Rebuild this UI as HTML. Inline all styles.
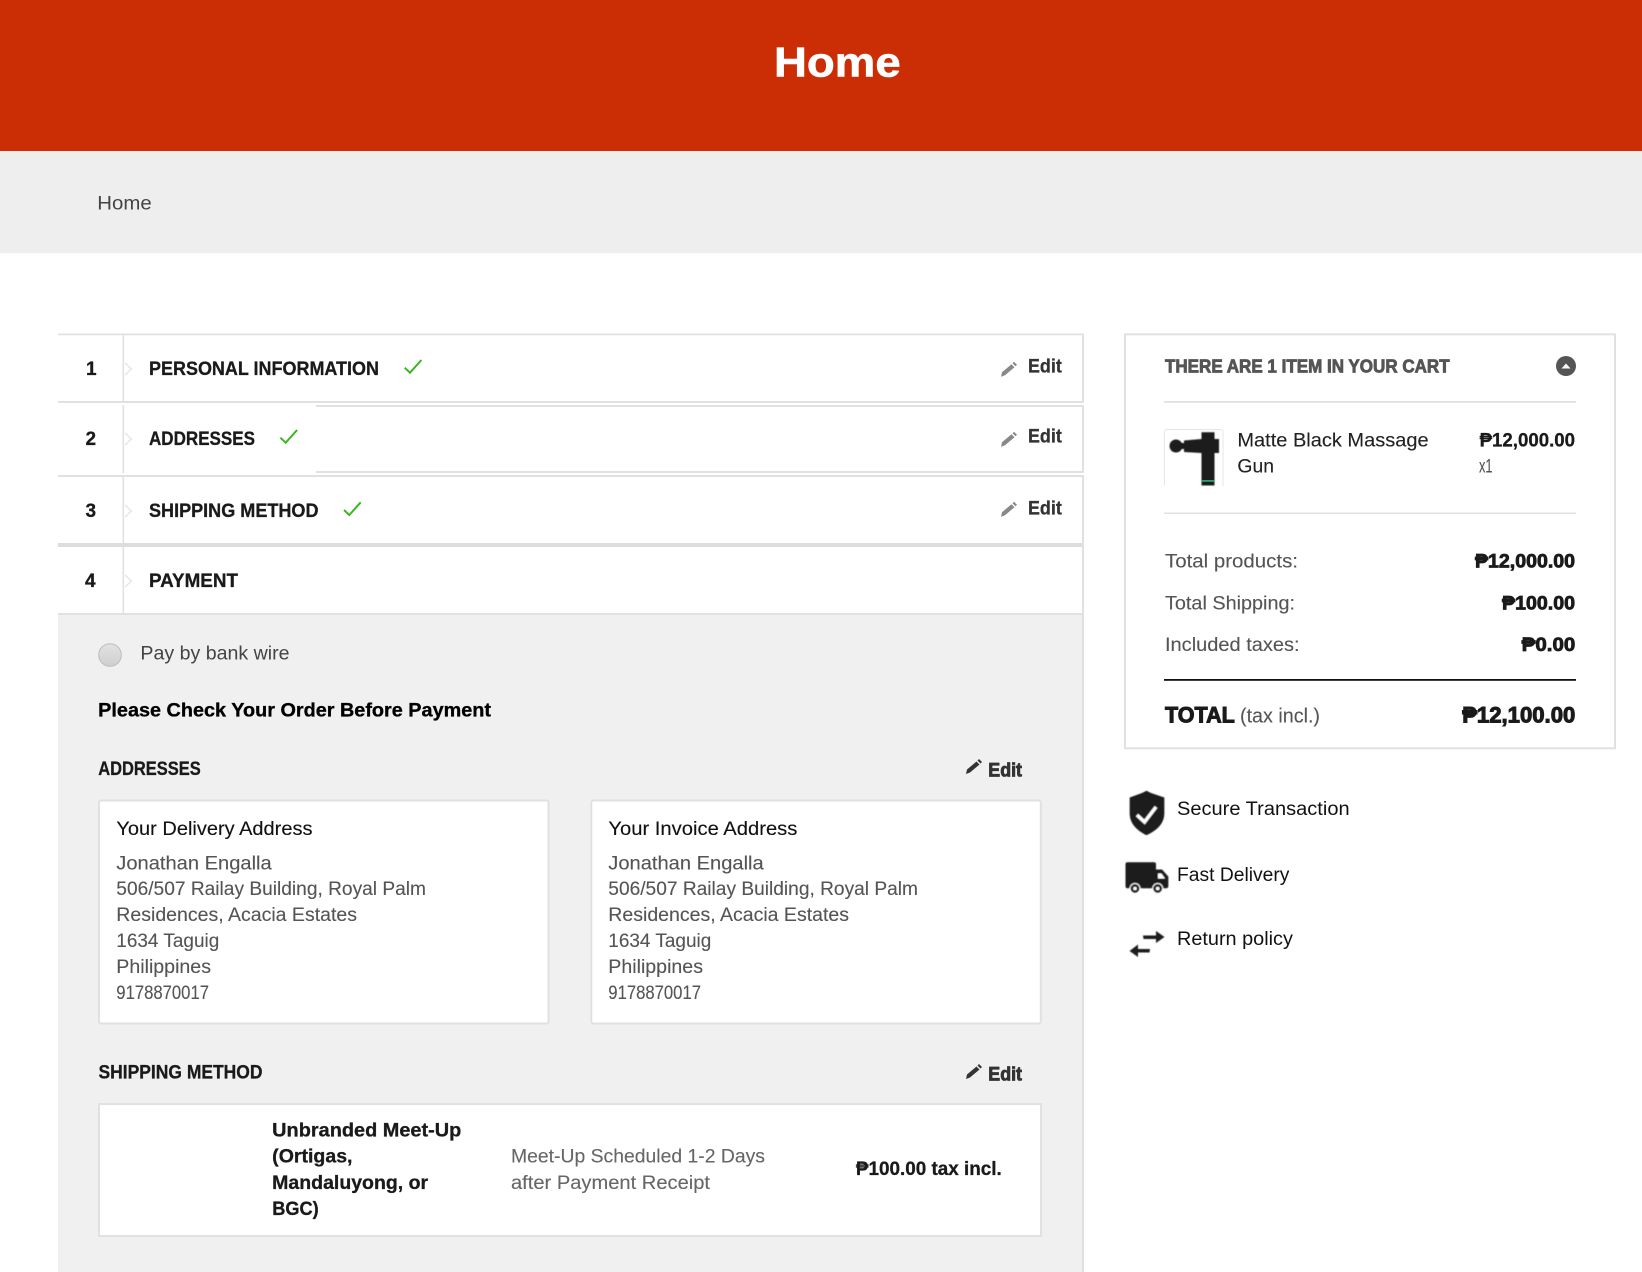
<!DOCTYPE html>
<html lang="en"><head><meta charset="utf-8"><title>Home</title>
<style>
html,body{margin:0;padding:0;background:#fff;width:1642px;height:1272px;overflow:hidden}
svg{display:block;position:absolute;left:0;top:0}
text{font-family:"Liberation Sans",sans-serif;font-size:19px}
.r{fill:#555;stroke:#555;stroke-width:.12px}
.d{fill:#000;stroke:#000;stroke-width:.12px}
.b{font-weight:700;fill:#1a1a1a;stroke:#1a1a1a;stroke-width:.3px}
.k{font-weight:700;fill:#1a1a1a;stroke:#1a1a1a;stroke-width:.8px}
.ln{fill:#e1e1e1}
</style></head><body>
<svg width="1642" height="1272" viewBox="0 0 1642 1272" xmlns="http://www.w3.org/2000/svg">
<defs>
<g id="pen"><path d="M0 15L1 10.5L10.5 2.5L13.5 5.5L4 13.5Z M11.5 1.5L13 0L16 3L14.5 4.5Z"/></g>
<g id="chk"><path d="M.7 7.7L6 12.7L17.4 0" fill="none" stroke="#3cb521" stroke-width="2"/></g>
<g id="chev"><path d="M125 0L131.5 6L125 12" fill="none" stroke="#e4e4e4" stroke-width="1.3"/></g>
<filter id="soft" x="-10%" y="-10%" width="120%" height="120%"><feGaussianBlur stdDeviation=".45"/></filter>
<linearGradient id="rg" x1="0" y1="0" x2="0" y2="1"><stop offset="0" stop-color="#e2e2e2"/><stop offset="1" stop-color="#cfcfcf"/></linearGradient>
</defs>

<rect width="1642" height="151" fill="#cb2e04"/>
<text x="774" y="76.7" style="font-size:42px;fill:#fff;font-weight:700;stroke:#fff;stroke-width:.6px" textLength="126.700" lengthAdjust="spacingAndGlyphs">Home</text>
<rect y="151" width="1642" height="102" fill="#eee"/>
<text x="97.3" y="209.3" style="font-size:19px;fill:#444" textLength="54.400" lengthAdjust="spacingAndGlyphs">Home</text>

<!-- Steps -->
<rect class="ln" x="58" y="333.500" width="1026" height="1.800"/>
<rect class="ln" x="58" y="401" width="1026" height="2"/>
<rect class="ln" x="316" y="405" width="768" height="2"/>
<rect class="ln" x="316" y="471" width="768" height="2"/>
<rect class="ln" x="58" y="475" width="1026" height="2"/>
<rect x="58" y="543" width="1026" height="4" fill="#dddde0"/>
<rect class="ln" x="1082" y="334" width="2" height="69"/>
<rect class="ln" x="1082" y="405" width="2" height="68"/>
<rect class="ln" x="1082" y="475" width="2" height="70"/>
<rect class="ln" x="1082" y="545" width="2" height="727"/>
<rect class="ln" x="122.500" y="335" width="1.600" height="66"/>
<rect class="ln" x="122.500" y="405" width="1.600" height="68"/>
<rect class="ln" x="122.500" y="477" width="1.600" height="66"/>
<rect class="ln" x="122.500" y="547" width="1.600" height="66"/>
<rect x="58" y="615" width="1024" height="657" fill="#f0f0f0"/>
<rect class="ln" x="58" y="613" width="1026" height="2"/>

<use href="#chev" y="363"/><use href="#chev" y="433"/><use href="#chev" y="505"/><use href="#chev" y="575"/>

<text class="b" x="86" y="375">1</text>
<text class="b" x="85.500" y="445">2</text>
<text class="b" x="85.500" y="517">3</text>
<text class="b" x="85" y="587">4</text>

<text class="b" x="149" y="375" textLength="230" lengthAdjust="spacingAndGlyphs">PERSONAL INFORMATION</text>
<text class="b" x="149" y="445" textLength="106" lengthAdjust="spacingAndGlyphs">ADDRESSES</text>
<text class="b" x="149" y="517" textLength="169.500" lengthAdjust="spacingAndGlyphs">SHIPPING METHOD</text>
<text class="b" x="149" y="587" textLength="89" lengthAdjust="spacingAndGlyphs">PAYMENT</text>

<use href="#chk" x="404" y="360"/><use href="#chk" x="279.700" y="430"/><use href="#chk" x="343.300" y="502.300"/>

<g fill="#888"><use href="#pen" x="1001" y="361.700"/><use href="#pen" x="1001" y="431.700"/><use href="#pen" x="1001" y="501.700"/></g>
<text class="b" x="1028" y="372.700" style="fill:#333;stroke:#333" textLength="33.800" lengthAdjust="spacingAndGlyphs">Edit</text>
<text class="b" x="1028" y="442.700" style="fill:#333;stroke:#333" textLength="33.800" lengthAdjust="spacingAndGlyphs">Edit</text>
<text class="b" x="1028" y="514.700" style="fill:#333;stroke:#333" textLength="33.800" lengthAdjust="spacingAndGlyphs">Edit</text>

<!-- Payment panel -->
<circle cx="110" cy="655" r="11.300" fill="url(#rg)" stroke="#bdbdbd" stroke-width="1"/>
<text x="140.400" y="659.300" style="font-size:19px;fill:#444" textLength="149.200" lengthAdjust="spacingAndGlyphs">Pay by bank wire</text>
<text class="b" x="98.200" y="716.700" style="fill:#000;stroke:#000" textLength="392.800" lengthAdjust="spacingAndGlyphs">Please Check Your Order Before Payment</text>
<text class="b" x="98.200" y="775" textLength="102.500" lengthAdjust="spacingAndGlyphs">ADDRESSES</text>
<use href="#pen" x="966" y="759" fill="#333"/>
<text class="k" x="988.300" y="776.700" style="fill:#333;stroke:#333" textLength="33.700" lengthAdjust="spacingAndGlyphs">Edit</text>

<rect x="99" y="800.500" width="449.500" height="223" rx="2" fill="#fff" stroke="#e1e1e1" stroke-width="2"/>
<rect x="591.300" y="800.500" width="449.500" height="223" rx="2" fill="#fff" stroke="#e1e1e1" stroke-width="2"/>

<text class="d" x="116.400" y="835" style="fill:#111;stroke:#111" textLength="196.100" lengthAdjust="spacingAndGlyphs">Your Delivery Address</text>
<text class="r" x="116.300" y="869.300" textLength="155.400" lengthAdjust="spacingAndGlyphs">Jonathan Engalla</text>
<text class="r" x="116.300" y="895" textLength="309.700" lengthAdjust="spacingAndGlyphs">506/507 Railay Building, Royal Palm</text>
<text class="r" x="116.300" y="921" textLength="240.700" lengthAdjust="spacingAndGlyphs">Residences, Acacia Estates</text>
<text class="r" x="116.300" y="947" textLength="103" lengthAdjust="spacingAndGlyphs">1634 Taguig</text>
<text class="r" x="116.300" y="973" textLength="94.700" lengthAdjust="spacingAndGlyphs">Philippines</text>
<text class="r" x="116.300" y="999" style="font-size:19px" textLength="92.700" lengthAdjust="spacingAndGlyphs">9178870017</text>

<text class="d" x="608.400" y="835" style="fill:#111;stroke:#111" textLength="189" lengthAdjust="spacingAndGlyphs">Your Invoice Address</text>
<text class="r" x="608.300" y="869.300" textLength="155.400" lengthAdjust="spacingAndGlyphs">Jonathan Engalla</text>
<text class="r" x="608.300" y="895" textLength="309.700" lengthAdjust="spacingAndGlyphs">506/507 Railay Building, Royal Palm</text>
<text class="r" x="608.300" y="921" textLength="240.700" lengthAdjust="spacingAndGlyphs">Residences, Acacia Estates</text>
<text class="r" x="608.300" y="947" textLength="103" lengthAdjust="spacingAndGlyphs">1634 Taguig</text>
<text class="r" x="608.300" y="973" textLength="94.700" lengthAdjust="spacingAndGlyphs">Philippines</text>
<text class="r" x="608.300" y="999" style="font-size:19px" textLength="92.700" lengthAdjust="spacingAndGlyphs">9178870017</text>

<text class="b" x="98.500" y="1078.300" textLength="164" lengthAdjust="spacingAndGlyphs">SHIPPING METHOD</text>
<use href="#pen" x="966" y="1064" fill="#333"/>
<text class="k" x="988.300" y="1080.700" style="fill:#333;stroke:#333" textLength="33.700" lengthAdjust="spacingAndGlyphs">Edit</text>

<rect x="99" y="1104" width="942" height="132" fill="#fff" stroke="#e1e1e1" stroke-width="2"/>
<text class="b" x="272.200" y="1136.700" textLength="189.100" lengthAdjust="spacingAndGlyphs">Unbranded Meet-Up</text>
<text class="b" x="272.200" y="1162.700" textLength="80.300" lengthAdjust="spacingAndGlyphs">(Ortigas,</text>
<text class="b" x="272.200" y="1189" textLength="155.900" lengthAdjust="spacingAndGlyphs">Mandaluyong, or</text>
<text class="b" x="272.200" y="1215" textLength="46.500" lengthAdjust="spacingAndGlyphs">BGC)</text>
<text class="r" x="511" y="1162.700" style="fill:#666;stroke:#666" textLength="254" lengthAdjust="spacingAndGlyphs">Meet-Up Scheduled 1-2 Days</text>
<text class="r" x="511" y="1189" style="fill:#666;stroke:#666" textLength="199" lengthAdjust="spacingAndGlyphs">after Payment Receipt</text>
<text class="b" x="855.900" y="1175" textLength="145.900" lengthAdjust="spacingAndGlyphs">₱100.00 tax incl.</text>

<!-- Cart -->
<rect x="1125" y="334.300" width="490" height="414" fill="#fff" stroke="#e1e1e1" stroke-width="2"/>
<text class="k" x="1165" y="372.700" style="font-size:18px;fill:#555;stroke:#555" textLength="284.600" lengthAdjust="spacingAndGlyphs">THERE ARE 1 ITEM IN YOUR CART</text>
<circle cx="1566" cy="366" r="10" fill="#555"/>
<path d="M1561.500 368.500L1566 363.500L1570.500 368.500Z" fill="#fff"/>
<rect class="ln" x="1164" y="401" width="412" height="1.800"/>
<path d="M1164.500 486V432Q1164.500 429.500 1167 429.500H1220.500Q1223 429.500 1223 432V486" fill="none" stroke="#e6e6e6"/>
<g fill="#1b1b1b" filter="url(#soft)">
<circle cx="1176" cy="446" r="6.500"/>
<rect x="1180" y="443" width="6" height="6"/>
<path d="M1184 440.500L1201.500 439V432.200H1214.500V439H1219V453H1214.500V485.500H1201.500V453L1184 452Z"/>
</g>
<rect x="1201.500" y="480" width="13" height="1.800" fill="#2f9e6e"/>
<text class="d" x="1237.400" y="446.700" style="fill:#222;stroke:#222" textLength="191.200" lengthAdjust="spacingAndGlyphs">Matte Black Massage</text>
<text class="d" x="1237.400" y="472.700" style="fill:#222;stroke:#222" textLength="36.600" lengthAdjust="spacingAndGlyphs">Gun</text>
<text class="b" x="1479.600" y="446.700" textLength="95.400" lengthAdjust="spacingAndGlyphs">₱12,000.00</text>
<text class="r" x="1479" y="472.700" textLength="13.600" lengthAdjust="spacingAndGlyphs">x1</text>
<rect class="ln" x="1164" y="512.500" width="412" height="1.500"/>

<text class="r" x="1165" y="567.300" textLength="133" lengthAdjust="spacingAndGlyphs">Total products:</text>
<text class="k" x="1475" y="567.300" textLength="100" lengthAdjust="spacingAndGlyphs">₱12,000.00</text>
<text class="r" x="1165" y="609.300" textLength="130" lengthAdjust="spacingAndGlyphs">Total Shipping:</text>
<text class="k" x="1502" y="609.300" textLength="73" lengthAdjust="spacingAndGlyphs">₱100.00</text>
<text class="r" x="1165" y="651" textLength="134.600" lengthAdjust="spacingAndGlyphs">Included taxes:</text>
<text class="k" x="1521.700" y="651" textLength="53.600" lengthAdjust="spacingAndGlyphs">₱0.00</text>
<rect x="1164" y="679" width="412" height="1.800" fill="#111"/>
<text class="k" x="1165" y="722.700" style="font-size:22px;stroke-width:1px" textLength="69.800" lengthAdjust="spacingAndGlyphs">TOTAL</text>
<text class="r" x="1240" y="722.700" style="font-size:20px" textLength="80" lengthAdjust="spacingAndGlyphs">(tax incl.)</text>
<text class="k" x="1462.200" y="722.700" style="font-size:22px;stroke-width:1px" textLength="113.100" lengthAdjust="spacingAndGlyphs">₱12,100.00</text>

<!-- Reassurance -->
<g filter="url(#soft)">
<path d="M1146.500 790.700L1151 793L1164.300 797.500V814Q1164 827 1147 835H1146Q1130 827 1129.700 814V797.500L1142 793Z" fill="#1a1a1a"/>
<path d="M1137 815L1144.500 822L1156 807" fill="none" stroke="#fff" stroke-width="3.400"/>
</g>
<text x="1177" y="815" style="fill:#111" textLength="172.600" lengthAdjust="spacingAndGlyphs">Secure Transaction</text>

<g filter="url(#soft)">
<path d="M1127.500 862.300H1154Q1156 862.300 1156 864.300V869.500H1162L1168.300 876.500V886Q1168.300 888.300 1166 888.300H1127.500Q1125.500 888.300 1125.500 886V864.300Q1125.500 862.300 1127.500 862.300Z" fill="#1a1a1a"/>
<path d="M1158 873.500H1161.500L1165 878.500H1158Z" fill="#fff"/>
<circle cx="1135" cy="888.500" r="5" fill="#1a1a1a" stroke="#fff" stroke-width="1"/>
<circle cx="1135" cy="888.500" r="1.800" fill="#fff"/>
<circle cx="1157.700" cy="888.500" r="5" fill="#1a1a1a" stroke="#fff" stroke-width="1"/>
<circle cx="1157.700" cy="888.500" r="1.800" fill="#fff"/>
</g>
<text x="1177" y="881" style="fill:#111" textLength="112.400" lengthAdjust="spacingAndGlyphs">Fast Delivery</text>

<g filter="url(#soft)" fill="#1a1a1a">
<path d="M1143 935.500H1156V931L1164.500 937L1156 943V939H1143.500Z"/>
<path d="M1150 949H1138V944.500L1129.500 951L1138 957V952.500H1149.500Z"/>
</g>
<text x="1177" y="945" style="fill:#111" textLength="115.900" lengthAdjust="spacingAndGlyphs">Return policy</text>
</svg>
</body></html>
